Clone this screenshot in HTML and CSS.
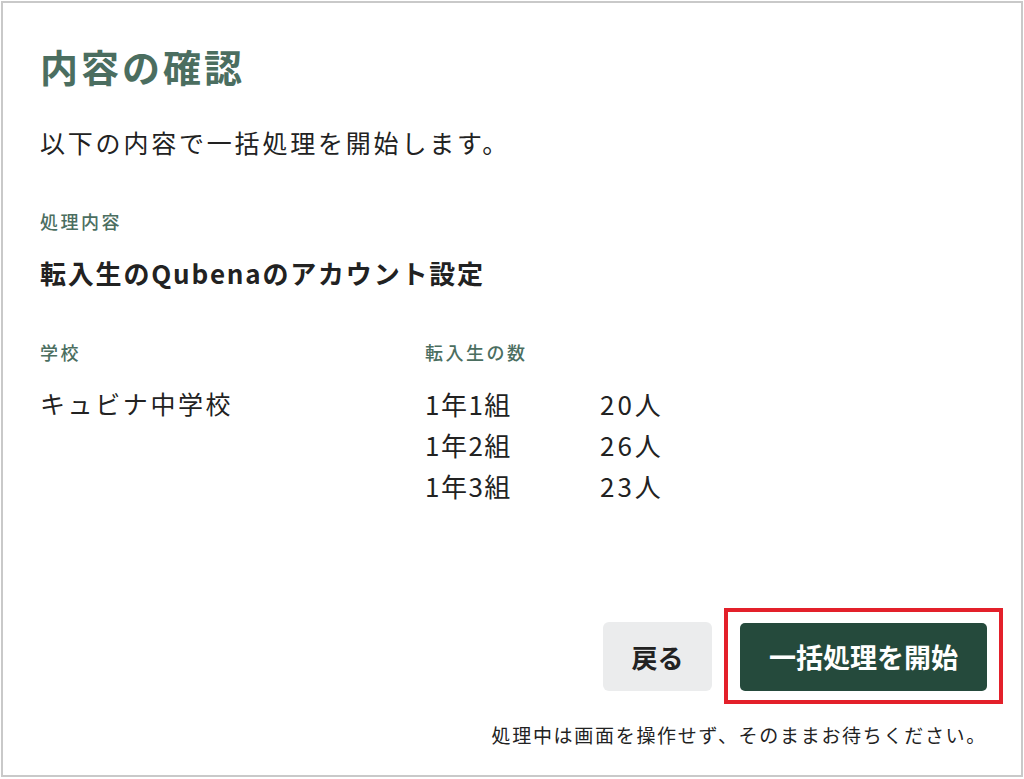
FILE: index.html
```html
<!DOCTYPE html>
<html lang="ja">
<head>
<meta charset="utf-8">
<title>内容の確認</title>
<link rel="stylesheet" href="styles.css">
</head>
<body>
<div class="frame">
  <h1 class="title">内容の確認</h1>
  <p class="lead">以下の内容で一括処理を開始します。</p>
  <div class="label label-first">処理内容</div>
  <div class="process">転入生のQubenaのアカウント設定</div>
  <div class="details">
    <div class="col col-school">
      <div class="label">学校</div>
      <div class="school">キュビナ中学校</div>
    </div>
    <div class="col col-count">
      <div class="label">転入生の数</div>
      <div class="counts">
        <span class="cls">1年1組</span><span class="num">20人</span>
        <span class="cls">1年2組</span><span class="num">26人</span>
        <span class="cls">1年3組</span><span class="num">23人</span>
      </div>
    </div>
  </div>
  <div class="actions">
    <button class="btn btn-back" type="button">戻る</button>
    <span class="highlight">
      <button class="btn btn-start" type="button">一括処理を開始</button>
    </span>
  </div>
  <p class="note">処理中は画面を操作せず、そのままお待ちください。</p>
</div>
</body>
</html>
```

FILE: styles.css
```css
* {
  box-sizing: border-box;
}

html, body {
  margin: 0;
  padding: 0;
  background: #ffffff;
}

body {
  font-family: "Noto Sans CJK JP", "Noto Sans", sans-serif;
  color: #222222;
}

.frame {
  margin: 1px;
  width: 1022px;
  height: 776px;
  border: 2px solid #c9c9c9;
  padding: 38px 34px 27px 37px;
  display: flex;
  flex-direction: column;
}

.title {
  margin: 0;
  font-size: 38px;
  line-height: 50px;
  font-weight: 700;
  letter-spacing: 3px;
  color: #4b6e60;
}

.lead {
  margin: 34px 0 0;
  font-size: 25px;
  line-height: 34px;
  font-weight: 400;
  letter-spacing: 2.8px;
}

.label {
  font-size: 18px;
  line-height: 26px;
  font-weight: 500;
  letter-spacing: 2.5px;
  color: #4b6e60;
}

.label-first {
  margin-top: 49px;
}

.process {
  margin-top: 22px;
  font-size: 26px;
  line-height: 34px;
  font-weight: 700;
  letter-spacing: 1.8px;
}

.details {
  margin-top: 49px;
  display: flex;
}

.col-school {
  width: 385px;
}

.school {
  margin-top: 18px;
  font-size: 25px;
  line-height: 41px;
  letter-spacing: 2.6px;
}

.counts {
  margin-top: 18px;
  display: grid;
  grid-template-columns: 175px auto;
  font-size: 26px;
  line-height: 41px;
  letter-spacing: 1.5px;
}

.num {
  letter-spacing: 3px;
}

.actions {
  margin-top: auto;
  display: flex;
  justify-content: flex-end;
  align-items: center;
  gap: 28px;
}

.btn {
  font-family: "Noto Sans CJK JP", "Noto Sans", sans-serif;
  font-weight: 700;
  font-size: 26px;
  border: none;
  padding: 0;
  cursor: pointer;
}

.btn-back {
  width: 109px;
  height: 69px;
  border-radius: 6px;
  background: #ebeced;
  color: #222222;
}

.highlight {
  position: relative;
  display: flex;
}

.highlight::after {
  content: "";
  position: absolute;
  top: -15px;
  left: -16px;
  right: -16px;
  bottom: -13px;
  border: 4px solid #e3202a;
  pointer-events: none;
}

.btn-start {
  width: 247px;
  height: 68px;
  border-radius: 5px;
  background: #254a3c;
  color: #ffffff;
  font-size: 27px;
}

.note {
  margin: 31px 0 0;
  text-align: right;
  font-size: 19px;
  line-height: 26px;
  letter-spacing: 1.7px;
}
```
